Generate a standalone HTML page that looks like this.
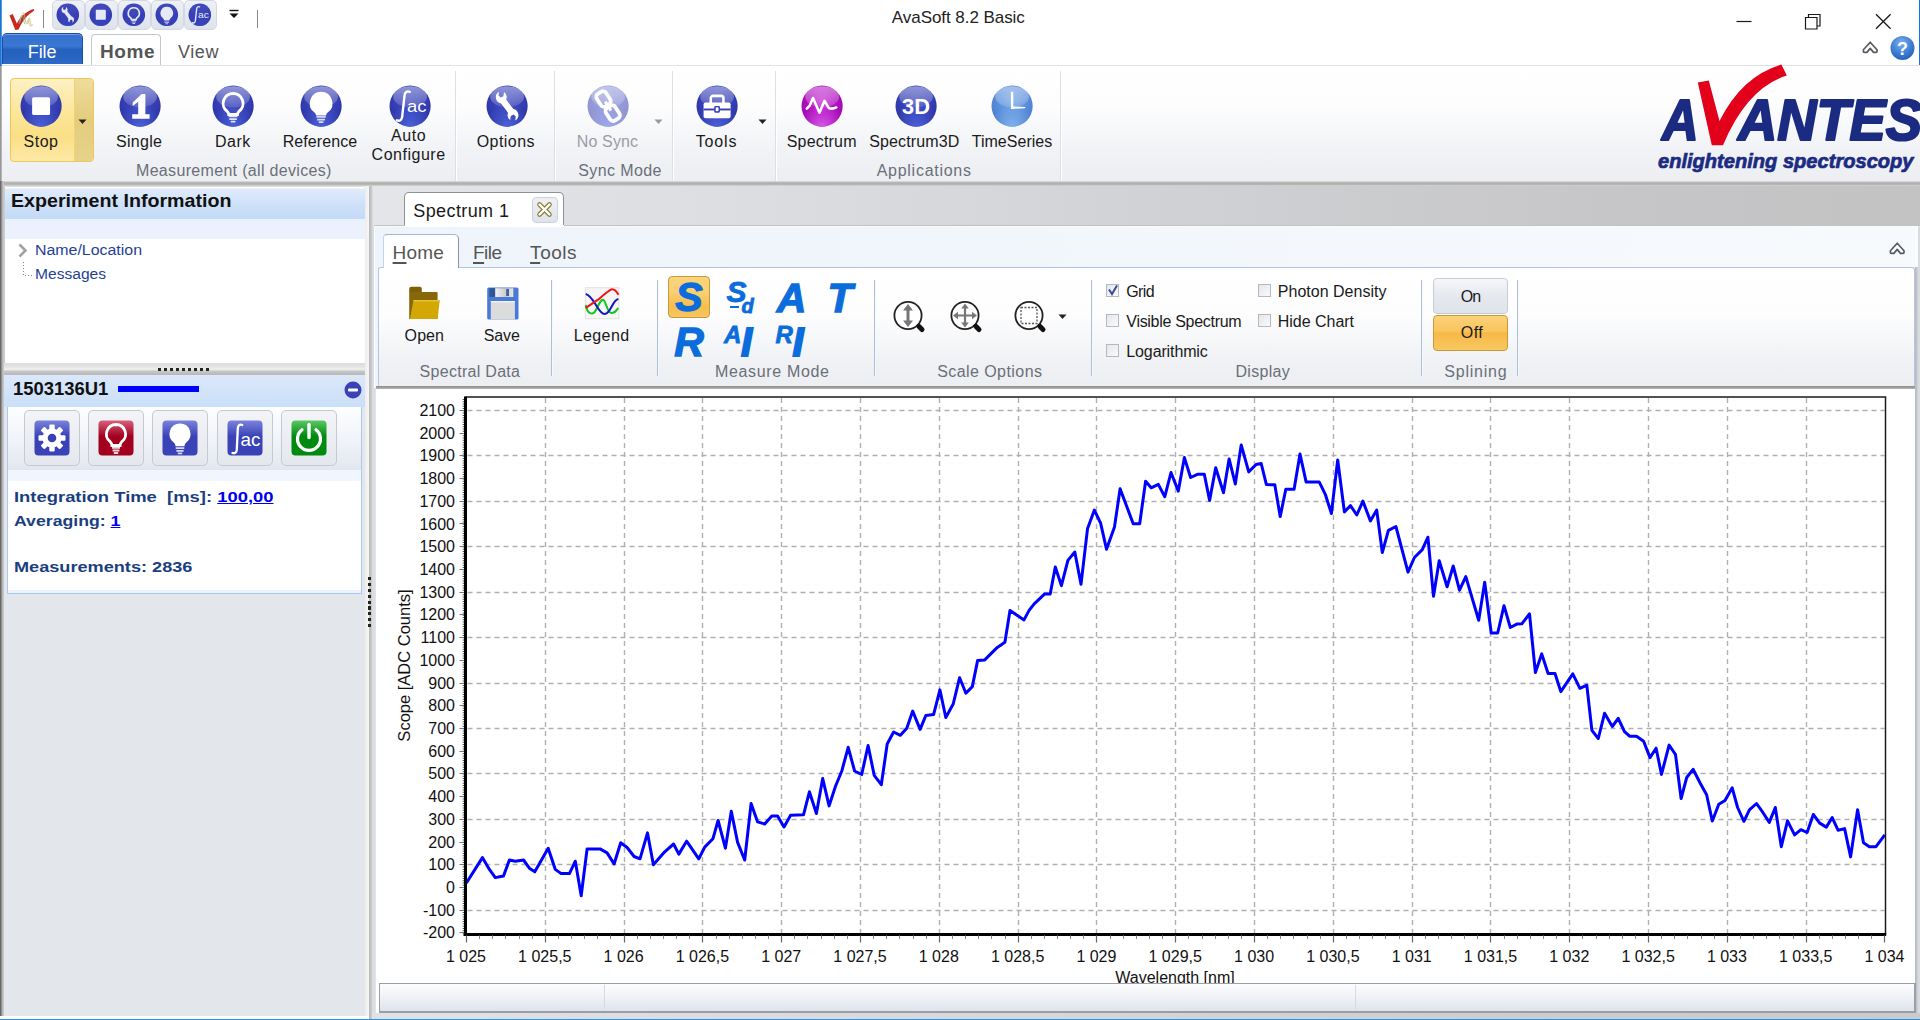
<!DOCTYPE html>
<html><head><meta charset="utf-8"><title>AvaSoft 8.2 Basic</title>
<style>
*{box-sizing:border-box;margin:0;padding:0}
html,body{width:1920px;height:1020px;overflow:hidden;background:#fff}
body{font-family:"Liberation Sans",sans-serif;position:relative;color:#1e1e1e}
.a{position:absolute}
.t{position:absolute;white-space:nowrap;line-height:1}
.c{transform:translateX(-50%)}
.lbl{font-size:16px;color:#1a1a1a;text-align:center}
.grp{font-size:16px;color:#6a6f78}
.sep{position:absolute;width:1px;background:#dcdfe5}
.sep2{position:absolute;width:1px;background:#fff}
</style></head><body>

<div class="a" style="left:0;top:0;width:1920px;height:65px;background:#fff"></div>
<div class="t" style="top:8.5px;font-size:17px;color:#222;letter-spacing:-0.052px;left:891.8px;">AvaSoft 8.2 Basic</div>
<svg class="a" style="left:0;top:0" width="1920" height="34"><path d="M1736.500 21.500h15" stroke="#1a1a1a" stroke-width="1.200" fill="none"/><path d="M1805.500 17.500h11.500v11.500h-11.500z M1808.500 17.500v-3h11.500v11.500h-3" stroke="#1a1a1a" stroke-width="1.200" fill="none"/><path d="M1876 14.200l14.600 14.600M1890.600 14.200l-14.600 14.600" stroke="#1a1a1a" stroke-width="1.300" fill="none"/></svg>
<svg class="a" style="left:0;top:0" width="40" height="34"><path d="M9.500 15.500l3.200-1.600 4.200 9.500C20 17 26 11.500 33.500 9l.9 1.400C27.500 14.500 22 21 18.600 29.600l-3.300.4Z" fill="#c8281e"/>
<path d="M20 22c1-5 2.400-9 3.400-9s1.400 4 2.200 8 1.600 4 2.400 0 1.400-4 2 0 1.400 4 2.200 4" fill="none" stroke="#b9c77a" stroke-width="1" opacity=".9"/>
<path d="M19 24c1.200-6 2.600-10 3.600-8s1.400 8 2.400 8" fill="none" stroke="#7db3a0" stroke-width="1" opacity=".8"/>
<path d="M28 20c.8 4 1.600 6 2.600 6s1.800-2 2.600-1" fill="none" stroke="#e7b68a" stroke-width="1" opacity=".9"/></svg><div class="a" style="left:43px;top:10px;width:1px;height:18px;background:#8a8a8a"></div><div class="a" style="left:52px;top:0px;width:32.500px;height:29.500px;border-radius:5px;background:linear-gradient(#eef1f6,#dde2ec);border:1px solid #d3d8e1"></div><div class="a" style="left:85px;top:0px;width:32.500px;height:29.500px;border-radius:5px;background:linear-gradient(#eef1f6,#dde2ec);border:1px solid #d3d8e1"></div><div class="a" style="left:118px;top:0px;width:32.500px;height:29.500px;border-radius:5px;background:linear-gradient(#eef1f6,#dde2ec);border:1px solid #d3d8e1"></div><div class="a" style="left:151px;top:0px;width:32.500px;height:29.500px;border-radius:5px;background:linear-gradient(#eef1f6,#dde2ec);border:1px solid #d3d8e1"></div><div class="a" style="left:184px;top:0px;width:32.500px;height:29.500px;border-radius:5px;background:linear-gradient(#eef1f6,#dde2ec);border:1px solid #d3d8e1"></div><svg class="a" style="left:56.2px;top:3.1999999999999993px;" width="23.6" height="23.6" viewBox="0 0 23.6 23.6"><defs>
<radialGradient id="g1" cx="50%" cy="38%" r="62%"><stop offset="0" stop-color="#3a44b8"/><stop offset=".55" stop-color="#3740b6"/><stop offset="1" stop-color="#343cb2"/></radialGradient>
<linearGradient id="g2" x1="0" y1="0" x2="0" y2="1"><stop offset="0" stop-color="#fff" stop-opacity=".45"/><stop offset="1" stop-color="#fff" stop-opacity=".13"/></linearGradient>
<radialGradient id="g3" cx="50%" cy="100%" r="55%"><stop offset="0" stop-color="#3a46bc" stop-opacity=".9"/><stop offset="1" stop-color="#3a46bc" stop-opacity="0"/></radialGradient>
</defs>
<g opacity="1"><circle cx="11.8" cy="11.8" r="11.3" fill="url(#g1)"/>
<circle cx="11.8" cy="11.8" r="11.3" fill="url(#g3)"/>
<ellipse cx="11.8" cy="6.608000000000001" rx="9.440000000000001" ry="5.9" fill="url(#g2)" opacity="0.12"/>
<g transform="scale(0.5900000000000001)" opacity="0.88"><g transform="rotate(-37 20 20) translate(20 20) scale(1.120) translate(-20 -20.500)"><path d="M17.300 15.600V25a2.700 2.700 0 0 0 5.400 0v-9.400a5.400 5.400 0 0 0 2.400-6.200l-2.600 2.600-2.500-.5-.5-2.500 2.400-2.400a5.400 5.400 0 0 0-4.600 9Z" fill="#fff"/><path d="M17.300 24v1.500a5.200 5.200 0 0 0-2.300 6l2.500-2.500 2.500.5.5 2.500-2.400 2.400a5.300 5.300 0 0 0 4.600-8.900V24Z" fill="#fff"/></g></g></g></svg><svg class="a" style="left:89.2px;top:3.1999999999999993px;" width="23.6" height="23.6" viewBox="0 0 23.6 23.6"><defs>
<radialGradient id="g4" cx="50%" cy="38%" r="62%"><stop offset="0" stop-color="#3a44b8"/><stop offset=".55" stop-color="#3740b6"/><stop offset="1" stop-color="#343cb2"/></radialGradient>
<linearGradient id="g5" x1="0" y1="0" x2="0" y2="1"><stop offset="0" stop-color="#fff" stop-opacity=".45"/><stop offset="1" stop-color="#fff" stop-opacity=".13"/></linearGradient>
<radialGradient id="g6" cx="50%" cy="100%" r="55%"><stop offset="0" stop-color="#3a46bc" stop-opacity=".9"/><stop offset="1" stop-color="#3a46bc" stop-opacity="0"/></radialGradient>
</defs>
<g opacity="1"><circle cx="11.8" cy="11.8" r="11.3" fill="url(#g4)"/>
<circle cx="11.8" cy="11.8" r="11.3" fill="url(#g6)"/>
<ellipse cx="11.8" cy="6.608000000000001" rx="9.440000000000001" ry="5.9" fill="url(#g5)" opacity="0.12"/>
<g transform="scale(0.5900000000000001)" opacity="0.88"><rect x="11.500" y="11.500" width="17" height="17" rx="1.500" fill="#fff"/></g></g></svg><svg class="a" style="left:122.2px;top:3.1999999999999993px;" width="23.6" height="23.6" viewBox="0 0 23.6 23.6"><defs>
<radialGradient id="g7" cx="50%" cy="38%" r="62%"><stop offset="0" stop-color="#3a44b8"/><stop offset=".55" stop-color="#3740b6"/><stop offset="1" stop-color="#343cb2"/></radialGradient>
<linearGradient id="g8" x1="0" y1="0" x2="0" y2="1"><stop offset="0" stop-color="#fff" stop-opacity=".45"/><stop offset="1" stop-color="#fff" stop-opacity=".13"/></linearGradient>
<radialGradient id="g9" cx="50%" cy="100%" r="55%"><stop offset="0" stop-color="#3a46bc" stop-opacity=".9"/><stop offset="1" stop-color="#3a46bc" stop-opacity="0"/></radialGradient>
</defs>
<g opacity="1"><circle cx="11.8" cy="11.8" r="11.3" fill="url(#g7)"/>
<circle cx="11.8" cy="11.8" r="11.3" fill="url(#g9)"/>
<ellipse cx="11.8" cy="6.608000000000001" rx="9.440000000000001" ry="5.9" fill="url(#g8)" opacity="0.12"/>
<g transform="scale(0.5900000000000001)" opacity="0.88"><path d="M20 8a9.400 9.400 0 0 0-5.700 16.900c1.100 1 1.500 1.900 1.600 3.100h8.200c.1-1.200.5-2.100 1.600-3.100A9.400 9.400 0 0 0 20 8Z" fill="none" stroke="#fff" stroke-width="2.800"/><path d="M15.800 29.700h8.400M16.400 32.300h7.200M17.800 34.700h4.400" stroke="#fff" stroke-width="1.700" opacity=".85"/></g></g></svg><svg class="a" style="left:155.2px;top:3.1999999999999993px;" width="23.6" height="23.6" viewBox="0 0 23.6 23.6"><defs>
<radialGradient id="g10" cx="50%" cy="38%" r="62%"><stop offset="0" stop-color="#3a44b8"/><stop offset=".55" stop-color="#3740b6"/><stop offset="1" stop-color="#343cb2"/></radialGradient>
<linearGradient id="g11" x1="0" y1="0" x2="0" y2="1"><stop offset="0" stop-color="#fff" stop-opacity=".45"/><stop offset="1" stop-color="#fff" stop-opacity=".13"/></linearGradient>
<radialGradient id="g12" cx="50%" cy="100%" r="55%"><stop offset="0" stop-color="#3a46bc" stop-opacity=".9"/><stop offset="1" stop-color="#3a46bc" stop-opacity="0"/></radialGradient>
</defs>
<g opacity="1"><circle cx="11.8" cy="11.8" r="11.3" fill="url(#g10)"/>
<circle cx="11.8" cy="11.8" r="11.3" fill="url(#g12)"/>
<ellipse cx="11.8" cy="6.608000000000001" rx="9.440000000000001" ry="5.9" fill="url(#g11)" opacity="0.12"/>
<g transform="scale(0.5900000000000001)" opacity="0.88"><path d="M20 6.500a10.800 10.800 0 0 0-6.500 19.400c1.100 1 1.600 1.800 1.700 3.100h9.600c.1-1.300.6-2.100 1.700-3.100A10.800 10.800 0 0 0 20 6.500Z" fill="#fff"/><path d="M15.600 30.300h8.800M16.300 32.800h7.400M17.800 35.200h4.400" stroke="#fff" stroke-width="1.600" opacity=".8"/></g></g></svg><svg class="a" style="left:188.2px;top:3.1999999999999993px;" width="23.6" height="23.6" viewBox="0 0 23.6 23.6"><defs>
<radialGradient id="g13" cx="50%" cy="38%" r="62%"><stop offset="0" stop-color="#3a44b8"/><stop offset=".55" stop-color="#3740b6"/><stop offset="1" stop-color="#343cb2"/></radialGradient>
<linearGradient id="g14" x1="0" y1="0" x2="0" y2="1"><stop offset="0" stop-color="#fff" stop-opacity=".45"/><stop offset="1" stop-color="#fff" stop-opacity=".13"/></linearGradient>
<radialGradient id="g15" cx="50%" cy="100%" r="55%"><stop offset="0" stop-color="#3a46bc" stop-opacity=".9"/><stop offset="1" stop-color="#3a46bc" stop-opacity="0"/></radialGradient>
</defs>
<g opacity="1"><circle cx="11.8" cy="11.8" r="11.3" fill="url(#g13)"/>
<circle cx="11.8" cy="11.8" r="11.3" fill="url(#g15)"/>
<ellipse cx="11.8" cy="6.608000000000001" rx="9.440000000000001" ry="5.9" fill="url(#g14)" opacity="0.12"/>
<g transform="scale(0.5900000000000001)" opacity="0.88"><path d="M7.500 33.500c2.800 1 4.600-.3 5-3.500l2.200-20c.4-3.200 2.200-4.500 5-3.500" fill="none" stroke="#fff" stroke-width="2.300" stroke-linecap="round"/><text x="17" y="25.500" font-family="Liberation Sans" font-size="16.500" fill="#fff" textLength="18.500" lengthAdjust="spacingAndGlyphs">ac</text></g></g></svg><svg class="a" style="left:226px;top:7px" width="16" height="14"><path d="M3.500 3.500h9" stroke="#111" stroke-width="1.400"/><path d="M3.500 6.500h9l-4.500 4.500z" fill="#111"/></svg><div class="a" style="left:257px;top:10px;width:1px;height:18px;background:#8a8a8a"></div>
<div class="a" style="left:2px;top:33px;width:81px;height:31px;border-radius:5px 5px 0 0;background:linear-gradient(#3570cc,#3a78d4 40%,#2660bd 52%,#2a64c2 80%,#2e6cc8);border:1px solid #1b4ea3;border-bottom:none;box-shadow:inset 0 1px 0 #6fa0e6"></div><div class="t" style="top:42.5px;font-size:18px;color:#fff;letter-spacing:-0.126px;left:27.8px;">File</div><div class="a" style="left:91px;top:34px;width:70px;height:32px;border-radius:4px 4px 0 0;background:#fff;border:1px solid #c4c8ce;border-bottom:none"></div><div class="t" style="top:42.3px;font-size:19px;color:#555;font-weight:bold;letter-spacing:0.553px;left:100.0px;">Home</div><div class="t" style="top:42.5px;font-size:18px;color:#555;letter-spacing:0.577px;left:178.0px;">View</div>
<svg class="a" style="left:1858px;top:36px" width="62" height="26">
<path d="M12.200 6.200L19 13.700V15.500Q19 16.400 18 16.400H15.500L12.200 12.400L8.900 16.400H6.400Q5.400 16.400 5.400 15.500V13.700Z" fill="#fff" stroke="#565c66" stroke-width="1.700" stroke-linejoin="round"/>
<defs><radialGradient id="g16" cx="45%" cy="30%" r="70%"><stop offset="0" stop-color="#7fb1ee"/><stop offset=".6" stop-color="#3f7fd6"/><stop offset="1" stop-color="#2a62b8"/></radialGradient></defs>
<circle cx="44.500" cy="12" r="12" fill="url(#g16)"/>
<text x="44.500" y="18.500" text-anchor="middle" font-family="Liberation Sans" font-weight="bold" font-size="18" fill="#fff">?</text>
</svg>
<div class="a" style="left:2px;top:65px;width:1918px;height:116px;background:linear-gradient(#ffffff 0%,#fdfdfe 35%,#f0f2f5 75%,#ecEEf2 100%);border-top:1px solid #dfe2e6"></div>
<div class="a" style="left:0;top:181px;width:1920px;height:7px;background:linear-gradient(#e4e4e5 0,#b6b6b7 22%,#aeaeaf 45%,#c4c4c5 60%,#dcdcde 72%,#e2e2e4 100%)"></div>
<div class="a" style="left:0;top:0;width:2px;height:66px;background:linear-gradient(90deg,#1976d8 60%,#a8ccf0)"></div>
<div class="a" style="left:0;top:66px;width:2px;height:116px;background:linear-gradient(90deg,#8a8a8a,#c4c4c4)"></div>
<div class="a" style="left:0;top:181px;width:4px;height:836px;background:linear-gradient(90deg,#555 0,#808080 28%,#b4b4b4 60%,#d0d0d0)"></div>
<div class="a" style="left:1919px;top:0;width:1px;height:65px;background:#1976d8"></div>
<div class="a" style="left:10px;top:78px;width:84px;height:84px;border-radius:4px;border:1px solid #f0c656;background:linear-gradient(#fdf1c4,#fce69a 40%,#fbdf86 70%,#fde9a6)"></div><div class="a" style="left:74px;top:79px;width:19px;height:82px;border-radius:0 3px 3px 0;border-left:1px solid #f3d36e;background:linear-gradient(#efdc9b,#e3cc7d 50%,#e6d28a)"></div><svg class="a" style="left:78px;top:118.500px" width="10" height="6"><path d="M.5 .500h8l-4 4.500z" fill="#222"/></svg><svg class="a" style="left:19.9px;top:85.19999999999999px;" width="42.2" height="42.2" viewBox="0 0 42.2 42.2"><defs>
<radialGradient id="g17" cx="50%" cy="38%" r="62%"><stop offset="0" stop-color="#4650c0"/><stop offset=".55" stop-color="#3640b6"/><stop offset="1" stop-color="#2c34a2"/></radialGradient>
<linearGradient id="g18" x1="0" y1="0" x2="0" y2="1"><stop offset="0" stop-color="#fff" stop-opacity=".45"/><stop offset="1" stop-color="#fff" stop-opacity=".13"/></linearGradient>
<radialGradient id="g19" cx="50%" cy="100%" r="55%"><stop offset="0" stop-color="#4f66e0" stop-opacity=".9"/><stop offset="1" stop-color="#4f66e0" stop-opacity="0"/></radialGradient>
</defs>
<g opacity="1"><circle cx="21.1" cy="21.1" r="20.6" fill="url(#g17)"/>
<circle cx="21.1" cy="21.1" r="20.6" fill="url(#g19)"/>
<ellipse cx="21.1" cy="11.816000000000003" rx="16.880000000000003" ry="10.55" fill="url(#g18)" opacity="1"/>
<g transform="scale(1.0550000000000002)" opacity="1"><rect x="11.500" y="11.500" width="17" height="17" rx="1.500" fill="#fff"/></g></g></svg><div class="t" style="top:134px;font-size:16px;color:#1a1a1a;letter-spacing:0.521px;left:23.5px;">Stop</div><svg class="a" style="left:118.9px;top:85.19999999999999px;" width="42.2" height="42.2" viewBox="0 0 42.2 42.2"><defs>
<radialGradient id="g20" cx="50%" cy="38%" r="62%"><stop offset="0" stop-color="#4650c0"/><stop offset=".55" stop-color="#3640b6"/><stop offset="1" stop-color="#2c34a2"/></radialGradient>
<linearGradient id="g21" x1="0" y1="0" x2="0" y2="1"><stop offset="0" stop-color="#fff" stop-opacity=".45"/><stop offset="1" stop-color="#fff" stop-opacity=".13"/></linearGradient>
<radialGradient id="g22" cx="50%" cy="100%" r="55%"><stop offset="0" stop-color="#4f66e0" stop-opacity=".9"/><stop offset="1" stop-color="#4f66e0" stop-opacity="0"/></radialGradient>
</defs>
<g opacity="1"><circle cx="21.1" cy="21.1" r="20.6" fill="url(#g20)"/>
<circle cx="21.1" cy="21.1" r="20.6" fill="url(#g22)"/>
<ellipse cx="21.1" cy="11.816000000000003" rx="16.880000000000003" ry="10.55" fill="url(#g21)" opacity="1"/>
<g transform="scale(1.0550000000000002)" opacity="1"><path d="M13 16.500 L21.500 8.500 H25 V27.800 H29 V32 H12.500 V27.800 H18.200 V15.800 L13 20Z" fill="#fff"/></g></g></svg><div class="t" style="top:134px;font-size:16px;color:#1a1a1a;letter-spacing:0.304px;left:116.0px;">Single</div><svg class="a" style="left:211.9px;top:85.19999999999999px;" width="42.2" height="42.2" viewBox="0 0 42.2 42.2"><defs>
<radialGradient id="g23" cx="50%" cy="38%" r="62%"><stop offset="0" stop-color="#4650c0"/><stop offset=".55" stop-color="#3640b6"/><stop offset="1" stop-color="#2c34a2"/></radialGradient>
<linearGradient id="g24" x1="0" y1="0" x2="0" y2="1"><stop offset="0" stop-color="#fff" stop-opacity=".45"/><stop offset="1" stop-color="#fff" stop-opacity=".13"/></linearGradient>
<radialGradient id="g25" cx="50%" cy="100%" r="55%"><stop offset="0" stop-color="#4f66e0" stop-opacity=".9"/><stop offset="1" stop-color="#4f66e0" stop-opacity="0"/></radialGradient>
</defs>
<g opacity="1"><circle cx="21.1" cy="21.1" r="20.6" fill="url(#g23)"/>
<circle cx="21.1" cy="21.1" r="20.6" fill="url(#g25)"/>
<ellipse cx="21.1" cy="11.816000000000003" rx="16.880000000000003" ry="10.55" fill="url(#g24)" opacity="1"/>
<g transform="scale(1.0550000000000002)" opacity="1"><path d="M20 8a9.400 9.400 0 0 0-5.700 16.900c1.100 1 1.500 1.900 1.600 3.100h8.200c.1-1.200.5-2.100 1.600-3.100A9.400 9.400 0 0 0 20 8Z" fill="none" stroke="#fff" stroke-width="2.800"/><path d="M15.800 29.700h8.400M16.400 32.300h7.200M17.800 34.700h4.400" stroke="#fff" stroke-width="1.700" opacity=".85"/></g></g></svg><div class="t" style="top:134px;font-size:16px;color:#1a1a1a;letter-spacing:0.479px;left:215.0px;">Dark</div><svg class="a" style="left:300.4px;top:85.19999999999999px;" width="42.2" height="42.2" viewBox="0 0 42.2 42.2"><defs>
<radialGradient id="g26" cx="50%" cy="38%" r="62%"><stop offset="0" stop-color="#4650c0"/><stop offset=".55" stop-color="#3640b6"/><stop offset="1" stop-color="#2c34a2"/></radialGradient>
<linearGradient id="g27" x1="0" y1="0" x2="0" y2="1"><stop offset="0" stop-color="#fff" stop-opacity=".45"/><stop offset="1" stop-color="#fff" stop-opacity=".13"/></linearGradient>
<radialGradient id="g28" cx="50%" cy="100%" r="55%"><stop offset="0" stop-color="#4f66e0" stop-opacity=".9"/><stop offset="1" stop-color="#4f66e0" stop-opacity="0"/></radialGradient>
</defs>
<g opacity="1"><circle cx="21.1" cy="21.1" r="20.6" fill="url(#g26)"/>
<circle cx="21.1" cy="21.1" r="20.6" fill="url(#g28)"/>
<ellipse cx="21.1" cy="11.816000000000003" rx="16.880000000000003" ry="10.55" fill="url(#g27)" opacity="1"/>
<g transform="scale(1.0550000000000002)" opacity="1"><path d="M20 6.500a10.800 10.800 0 0 0-6.500 19.400c1.100 1 1.600 1.800 1.700 3.100h9.600c.1-1.300.6-2.100 1.700-3.100A10.800 10.800 0 0 0 20 6.500Z" fill="#fff"/><path d="M15.600 30.300h8.800M16.300 32.800h7.400M17.800 35.200h4.400" stroke="#fff" stroke-width="1.600" opacity=".8"/></g></g></svg><div class="t" style="top:134px;font-size:16px;color:#1a1a1a;letter-spacing:0.086px;left:282.7px;">Reference</div><svg class="a" style="left:388.9px;top:85.19999999999999px;" width="42.2" height="42.2" viewBox="0 0 42.2 42.2"><defs>
<radialGradient id="g29" cx="50%" cy="38%" r="62%"><stop offset="0" stop-color="#4650c0"/><stop offset=".55" stop-color="#3640b6"/><stop offset="1" stop-color="#2c34a2"/></radialGradient>
<linearGradient id="g30" x1="0" y1="0" x2="0" y2="1"><stop offset="0" stop-color="#fff" stop-opacity=".45"/><stop offset="1" stop-color="#fff" stop-opacity=".13"/></linearGradient>
<radialGradient id="g31" cx="50%" cy="100%" r="55%"><stop offset="0" stop-color="#4f66e0" stop-opacity=".9"/><stop offset="1" stop-color="#4f66e0" stop-opacity="0"/></radialGradient>
</defs>
<g opacity="1"><circle cx="21.1" cy="21.1" r="20.6" fill="url(#g29)"/>
<circle cx="21.1" cy="21.1" r="20.6" fill="url(#g31)"/>
<ellipse cx="21.1" cy="11.816000000000003" rx="16.880000000000003" ry="10.55" fill="url(#g30)" opacity="1"/>
<g transform="scale(1.0550000000000002)" opacity="1"><path d="M7.500 33.500c2.800 1 4.600-.3 5-3.500l2.200-20c.4-3.200 2.200-4.500 5-3.500" fill="none" stroke="#fff" stroke-width="2.300" stroke-linecap="round"/><text x="17" y="25.500" font-family="Liberation Sans" font-size="16.500" fill="#fff" textLength="18.500" lengthAdjust="spacingAndGlyphs">ac</text></g></g></svg><svg class="a" style="left:486.4px;top:85.19999999999999px;" width="42.2" height="42.2" viewBox="0 0 42.2 42.2"><defs>
<radialGradient id="g32" cx="50%" cy="38%" r="62%"><stop offset="0" stop-color="#4650c0"/><stop offset=".55" stop-color="#3640b6"/><stop offset="1" stop-color="#2c34a2"/></radialGradient>
<linearGradient id="g33" x1="0" y1="0" x2="0" y2="1"><stop offset="0" stop-color="#fff" stop-opacity=".45"/><stop offset="1" stop-color="#fff" stop-opacity=".13"/></linearGradient>
<radialGradient id="g34" cx="50%" cy="100%" r="55%"><stop offset="0" stop-color="#4f66e0" stop-opacity=".9"/><stop offset="1" stop-color="#4f66e0" stop-opacity="0"/></radialGradient>
</defs>
<g opacity="1"><circle cx="21.1" cy="21.1" r="20.6" fill="url(#g32)"/>
<circle cx="21.1" cy="21.1" r="20.6" fill="url(#g34)"/>
<ellipse cx="21.1" cy="11.816000000000003" rx="16.880000000000003" ry="10.55" fill="url(#g33)" opacity="1"/>
<g transform="scale(1.0550000000000002)" opacity="1"><g transform="rotate(-37 20 20) translate(20 20) scale(1.120) translate(-20 -20.500)"><path d="M17.300 15.600V25a2.700 2.700 0 0 0 5.400 0v-9.400a5.400 5.400 0 0 0 2.400-6.200l-2.600 2.600-2.500-.5-.5-2.500 2.400-2.400a5.400 5.400 0 0 0-4.600 9Z" fill="#fff"/><path d="M17.300 24v1.500a5.200 5.200 0 0 0-2.300 6l2.500-2.500 2.500.5.5 2.500-2.400 2.400a5.300 5.300 0 0 0 4.600-8.900V24Z" fill="#fff"/></g></g></g></svg><div class="t" style="top:134px;font-size:16px;color:#1a1a1a;letter-spacing:0.451px;left:476.7px;">Options</div><svg class="a" style="left:586.9px;top:85.19999999999999px;" width="42.2" height="42.2" viewBox="0 0 42.2 42.2"><defs>
<radialGradient id="g35" cx="50%" cy="38%" r="62%"><stop offset="0" stop-color="#4650c0"/><stop offset=".55" stop-color="#3640b6"/><stop offset="1" stop-color="#2c34a2"/></radialGradient>
<linearGradient id="g36" x1="0" y1="0" x2="0" y2="1"><stop offset="0" stop-color="#fff" stop-opacity=".45"/><stop offset="1" stop-color="#fff" stop-opacity=".13"/></linearGradient>
<radialGradient id="g37" cx="50%" cy="100%" r="55%"><stop offset="0" stop-color="#4f66e0" stop-opacity=".9"/><stop offset="1" stop-color="#4f66e0" stop-opacity="0"/></radialGradient>
</defs>
<g opacity="0.52"><circle cx="21.1" cy="21.1" r="20.6" fill="url(#g35)"/>
<circle cx="21.1" cy="21.1" r="20.6" fill="url(#g37)"/>
<ellipse cx="21.1" cy="11.816000000000003" rx="16.880000000000003" ry="10.55" fill="url(#g36)" opacity="1"/>
<g transform="scale(1.0550000000000002)" opacity="1"><g transform="rotate(-33 20 20)" fill="none" stroke="#fff" stroke-width="3.600"><rect x="14.800" y="5" width="10.400" height="14" rx="3.400"/><rect x="14.800" y="21" width="10.400" height="14" rx="3.400"/><path d="M20 15v10" stroke-width="3"/></g></g></g></svg><div class="t" style="top:134px;font-size:16px;color:#9a9da4;letter-spacing:0.161px;left:576.7px;">No Sync</div><svg class="a" style="left:696.4px;top:85.19999999999999px;" width="42.2" height="42.2" viewBox="0 0 42.2 42.2"><defs>
<radialGradient id="g38" cx="50%" cy="38%" r="62%"><stop offset="0" stop-color="#4650c0"/><stop offset=".55" stop-color="#3640b6"/><stop offset="1" stop-color="#2c34a2"/></radialGradient>
<linearGradient id="g39" x1="0" y1="0" x2="0" y2="1"><stop offset="0" stop-color="#fff" stop-opacity=".45"/><stop offset="1" stop-color="#fff" stop-opacity=".13"/></linearGradient>
<radialGradient id="g40" cx="50%" cy="100%" r="55%"><stop offset="0" stop-color="#4f66e0" stop-opacity=".9"/><stop offset="1" stop-color="#4f66e0" stop-opacity="0"/></radialGradient>
</defs>
<g opacity="1"><circle cx="21.1" cy="21.1" r="20.6" fill="url(#g38)"/>
<circle cx="21.1" cy="21.1" r="20.6" fill="url(#g40)"/>
<ellipse cx="21.1" cy="11.816000000000003" rx="16.880000000000003" ry="10.55" fill="url(#g39)" opacity="1"/>
<g transform="scale(1.0550000000000002)" opacity="1"><path d="M14 17v-4.500a2.200 2.200 0 0 1 2.200-2.200h7.600a2.200 2.200 0 0 1 2.200 2.200V17" fill="none" stroke="#fff" stroke-width="2.400"/><rect x="7.200" y="16.500" width="25.600" height="15" rx="1.800" fill="#fff"/><rect x="7.200" y="22.300" width="25.600" height="1.800" fill="#3840b4"/><rect x="17.300" y="19.800" width="5.400" height="6.400" rx="1" fill="#3840b4"/><rect x="18.700" y="21.200" width="2.600" height="3.600" fill="#fff"/></g></g></svg><div class="t" style="top:134px;font-size:16px;color:#1a1a1a;letter-spacing:0.850px;left:695.7px;">Tools</div><svg class="a" style="left:801.4px;top:85.19999999999999px;" width="42.2" height="42.2" viewBox="0 0 42.2 42.2"><defs>
<radialGradient id="g41" cx="50%" cy="38%" r="62%"><stop offset="0" stop-color="#c838d4"/><stop offset=".55" stop-color="#b010c0"/><stop offset="1" stop-color="#9a0aa8"/></radialGradient>
<linearGradient id="g42" x1="0" y1="0" x2="0" y2="1"><stop offset="0" stop-color="#fff" stop-opacity=".45"/><stop offset="1" stop-color="#fff" stop-opacity=".13"/></linearGradient>
<radialGradient id="g43" cx="50%" cy="100%" r="55%"><stop offset="0" stop-color="#e060f0" stop-opacity=".9"/><stop offset="1" stop-color="#e060f0" stop-opacity="0"/></radialGradient>
</defs>
<g opacity="1"><circle cx="21.1" cy="21.1" r="20.6" fill="url(#g41)"/>
<circle cx="21.1" cy="21.1" r="20.6" fill="url(#g43)"/>
<ellipse cx="21.1" cy="11.816000000000003" rx="16.880000000000003" ry="10.55" fill="url(#g42)" opacity="1"/>
<g transform="scale(1.0550000000000002)" opacity="1"><path d="M5.500 22.500L8.300 19.500L11.400 12.300L17.500 26.300L22.300 15L26.300 21.800Q29.500 23.200 33.500 21.300" fill="none" stroke="#fff" stroke-width="2.400" stroke-linejoin="round" stroke-linecap="round"/></g></g></svg><div class="t" style="top:134px;font-size:16px;color:#1a1a1a;letter-spacing:0.191px;left:786.7px;">Spectrum</div><svg class="a" style="left:894.5px;top:85.19999999999999px;" width="42.2" height="42.2" viewBox="0 0 42.2 42.2"><defs>
<radialGradient id="g44" cx="50%" cy="38%" r="62%"><stop offset="0" stop-color="#4650c0"/><stop offset=".55" stop-color="#3640b6"/><stop offset="1" stop-color="#2c34a2"/></radialGradient>
<linearGradient id="g45" x1="0" y1="0" x2="0" y2="1"><stop offset="0" stop-color="#fff" stop-opacity=".45"/><stop offset="1" stop-color="#fff" stop-opacity=".13"/></linearGradient>
<radialGradient id="g46" cx="50%" cy="100%" r="55%"><stop offset="0" stop-color="#4f66e0" stop-opacity=".9"/><stop offset="1" stop-color="#4f66e0" stop-opacity="0"/></radialGradient>
</defs>
<g opacity="1"><circle cx="21.1" cy="21.1" r="20.6" fill="url(#g44)"/>
<circle cx="21.1" cy="21.1" r="20.6" fill="url(#g46)"/>
<ellipse cx="21.1" cy="11.816000000000003" rx="16.880000000000003" ry="10.55" fill="url(#g45)" opacity="1"/>
<g transform="scale(1.0550000000000002)" opacity="1"><text x="20" y="27.600" text-anchor="middle" font-family="Liberation Sans" font-weight="bold" font-size="21" fill="#fff" textLength="26.500" lengthAdjust="spacingAndGlyphs">3D</text></g></g></svg><div class="t" style="top:134px;font-size:16px;color:#1a1a1a;letter-spacing:0.108px;left:869.3px;">Spectrum3D</div><svg class="a" style="left:990.6999999999999px;top:85.19999999999999px;" width="42.2" height="42.2" viewBox="0 0 42.2 42.2"><defs>
<radialGradient id="g47" cx="50%" cy="38%" r="62%"><stop offset="0" stop-color="#7aa8e6"/><stop offset=".55" stop-color="#5a8fdc"/><stop offset="1" stop-color="#4a7ccc"/></radialGradient>
<linearGradient id="g48" x1="0" y1="0" x2="0" y2="1"><stop offset="0" stop-color="#fff" stop-opacity=".45"/><stop offset="1" stop-color="#fff" stop-opacity=".13"/></linearGradient>
<radialGradient id="g49" cx="50%" cy="100%" r="55%"><stop offset="0" stop-color="#8ab8f0" stop-opacity=".9"/><stop offset="1" stop-color="#8ab8f0" stop-opacity="0"/></radialGradient>
</defs>
<g opacity="1"><circle cx="21.1" cy="21.1" r="20.6" fill="url(#g47)"/>
<circle cx="21.1" cy="21.1" r="20.6" fill="url(#g49)"/>
<ellipse cx="21.1" cy="11.816000000000003" rx="16.880000000000003" ry="10.55" fill="url(#g48)" opacity="1"/>
<g transform="scale(1.0550000000000002)" opacity="1"><path d="M18.900 6.500h2.200V20.300L32.500 20.900V22L20 22.700h-1.100Z" fill="#fff"/></g></g></svg><div class="t" style="top:134px;font-size:16px;color:#1a1a1a;letter-spacing:0.028px;left:971.7px;">TimeSeries</div><div class="t" style="top:128px;font-size:16px;color:#1a1a1a;letter-spacing:0.521px;left:391.1px;">Auto</div><div class="t" style="top:147px;font-size:16px;color:#1a1a1a;letter-spacing:0.514px;left:371.6px;">Configure</div><svg class="a" style="left:654px;top:118.500px" width="10" height="6"><path d="M.5 .500h8l-4 4.500z" fill="#999"/></svg><svg class="a" style="left:757.500px;top:118.500px" width="10" height="6"><path d="M.5 .500h8l-4 4.500z" fill="#222"/></svg><div class="t" style="top:162.5px;font-size:16px;color:#6a6f78;letter-spacing:0.323px;left:136.0px;">Measurement (all devices)</div><div class="t" style="top:162.5px;font-size:16px;color:#6a6f78;letter-spacing:0.373px;left:578.3px;">Sync Mode</div><div class="t" style="top:162.5px;font-size:16px;color:#6a6f78;letter-spacing:0.727px;left:876.7px;">Applications</div><div class="sep" style="left:455px;top:71px;height:110px"></div><div class="sep2" style="left:456px;top:71px;height:110px"></div><div class="sep" style="left:554px;top:71px;height:110px"></div><div class="sep2" style="left:555px;top:71px;height:110px"></div><div class="sep" style="left:672px;top:71px;height:110px"></div><div class="sep2" style="left:673px;top:71px;height:110px"></div><div class="sep" style="left:775px;top:71px;height:110px"></div><div class="sep2" style="left:776px;top:71px;height:110px"></div><div class="sep" style="left:1060px;top:71px;height:110px"></div><div class="sep2" style="left:1061px;top:71px;height:110px"></div>
<svg class="a" style="left:1640px;top:60px" width="280" height="121" viewBox="1640 60 280 121"><text x="1662" y="139.600" font-family="Liberation Sans" font-weight="bold" font-style="italic" font-size="57.700" fill="#1c2b82" stroke="#1c2b82" stroke-width="2.200" stroke-linejoin="round" textLength="36.500" lengthAdjust="spacingAndGlyphs">A</text><text x="1738" y="139.600" font-family="Liberation Sans" font-weight="bold" font-style="italic" font-size="57.700" fill="#1c2b82" stroke="#1c2b82" stroke-width="2.200" stroke-linejoin="round" textLength="184" lengthAdjust="spacingAndGlyphs">ANTES</text><path d="M1697.800 82.500 L1708.800 80.500 L1719.500 121 Q1742 76 1781.400 64.600 L1786.800 75.600 Q1747 88 1723 145.300 L1711.800 145.300 Z" fill="#e2001a"/><text x="1658" y="167.500" font-family="Liberation Sans" font-weight="bold" font-style="italic" font-size="19.500" fill="#1c2b82" stroke="#1c2b82" stroke-width=".7" textLength="255.500" lengthAdjust="spacingAndGlyphs">enlightening spectroscopy</text></svg>
<div class="a" style="left:4px;top:188px;width:1916px;height:827.600px;background:#e3e6ea"></div>
<div class="a" style="left:4px;top:187px;width:362px;height:177px;background:#fff;border:1px solid #c9ccd2;border-top:none"></div><div class="a" style="left:5px;top:188px;width:360px;height:31px;background:linear-gradient(#dfebfc,#cfe1f9 50%,#c3daf8);border-top:1px solid #f6f4ec"></div><div class="a" style="left:5px;top:219px;width:360px;height:20px;background:#ebf2fd"></div><div class="t" style="top:191.5px;font-size:18.5px;color:#111;font-weight:bold;transform:scaleX(1.0619);transform-origin:0 0;left:11.3px;">Experiment Information</div><svg class="a" style="left:16px;top:242px" width="22" height="40"><path d="M3.500 2.500l6 6-6 6" fill="none" stroke="#a2a2a2" stroke-width="2.600"/><path d="M7.500 20v13.500h9" fill="none" stroke="#888" stroke-width="1" stroke-dasharray="1 2"/></svg><div class="t" style="top:242px;font-size:15.5px;color:#1f3f96;transform:scaleX(1.0263);transform-origin:0 0;left:35.3px;">Name/Location</div><div class="t" style="top:266px;font-size:15.5px;color:#1f3f96;transform:scaleX(1.0050);transform-origin:0 0;left:35.3px;">Messages</div><div class="a" style="left:4px;top:363px;width:362px;height:11.500px;background:linear-gradient(#dcdcdd 0,#e4e4e5 35%,#f0f0f1 52%,#c6c6c7 70%,#b6b6b7 100%)"></div><div class="a" style="left:158px;top:368px;width:52px;height:3px;background:repeating-linear-gradient(90deg,#222 0 3px,transparent 3px 6px)"></div><div class="a" style="left:7px;top:375px;width:355px;height:219px;background:#fff;border:1px solid #a9c9f1;box-shadow:inset 0 -3px 0 #eaf2fd"></div><div class="a" style="left:4px;top:375px;width:362px;height:32px;background:linear-gradient(#dbe8fb,#cadff8)"></div><div class="t" style="top:380px;font-size:18px;color:#111;font-weight:bold;transform:scaleX(1.0238);transform-origin:0 0;left:13.0px;">1503136U1</div><div class="a" style="left:118px;top:386px;width:81px;height:6px;background:#0000ff"></div><svg class="a" style="left:344px;top:381px" width="18" height="18"><circle cx="9" cy="9" r="8.500" fill="#3a42b6"/><rect x="4" y="7.500" width="10" height="3" rx="1" fill="#fff"/></svg><div class="a" style="left:8px;top:407px;width:353px;height:63px;background:linear-gradient(#fdfeff,#f1f4f9 50%,#e2e6ee)"></div><div class="a" style="left:8px;top:470px;width:353px;height:11px;background:#f1f5fd"></div><div class="a" style="left:24px;top:410px;width:56px;height:56px;border-radius:5px;border:1px solid #c5c9d1;background:linear-gradient(#f3f4f7,#e4e7ed)"></div><svg class="a" style="left:34px;top:420px;" width="36" height="36" viewBox="0 0 36 36"><defs><linearGradient id="g50" x1="0" y1="0" x2="0" y2="1"><stop offset="0" stop-color="#7a84dc"/><stop offset=".45" stop-color="#3a42b8"/><stop offset="1" stop-color="#3a42b8"/></linearGradient></defs>
<rect x=".5" y=".5" width="35" height="35" rx="4" fill="url(#g50)"/><g transform="translate(-2 -2)"><g fill="#fff"><circle cx="20" cy="20" r="9.500"/><rect x="17.300" y="6.500" width="5.400" height="7" rx="1" transform="rotate(0 20 20)"/><rect x="17.300" y="6.500" width="5.400" height="7" rx="1" transform="rotate(45 20 20)"/><rect x="17.300" y="6.500" width="5.400" height="7" rx="1" transform="rotate(90 20 20)"/><rect x="17.300" y="6.500" width="5.400" height="7" rx="1" transform="rotate(135 20 20)"/><rect x="17.300" y="6.500" width="5.400" height="7" rx="1" transform="rotate(180 20 20)"/><rect x="17.300" y="6.500" width="5.400" height="7" rx="1" transform="rotate(225 20 20)"/><rect x="17.300" y="6.500" width="5.400" height="7" rx="1" transform="rotate(270 20 20)"/><rect x="17.300" y="6.500" width="5.400" height="7" rx="1" transform="rotate(315 20 20)"/></g><circle cx="20" cy="20" r="4.300" fill="#3840b4"/></g></svg><div class="a" style="left:88px;top:410px;width:56px;height:56px;border-radius:5px;border:1px solid #c5c9d1;background:linear-gradient(#f3f4f7,#e4e7ed)"></div><svg class="a" style="left:98px;top:420px;" width="36" height="36" viewBox="0 0 36 36"><defs><linearGradient id="g51" x1="0" y1="0" x2="0" y2="1"><stop offset="0" stop-color="#d8607a"/><stop offset=".45" stop-color="#a3001f"/><stop offset="1" stop-color="#a3001f"/></linearGradient></defs>
<rect x=".5" y=".5" width="35" height="35" rx="4" fill="url(#g51)"/><g transform="translate(-2 -2)"><path d="M20 6.500a9.600 9.600 0 0 0-5.800 17.200c1.100 1 1.600 2 1.700 3.800h8.200c.1-1.800.6-2.800 1.700-3.800A9.600 9.600 0 0 0 20 6.500Z" fill="none" stroke="#fff" stroke-width="2.800"/><path d="M16 29.800h8M16.600 32.500h6.800M17.800 35h4.400" stroke="#fff" stroke-width="1.800" opacity=".85"/></g></svg><div class="a" style="left:152px;top:410px;width:56px;height:56px;border-radius:5px;border:1px solid #c5c9d1;background:linear-gradient(#f3f4f7,#e4e7ed)"></div><svg class="a" style="left:162px;top:420px;" width="36" height="36" viewBox="0 0 36 36"><defs><linearGradient id="g52" x1="0" y1="0" x2="0" y2="1"><stop offset="0" stop-color="#7a84dc"/><stop offset=".45" stop-color="#3a42b8"/><stop offset="1" stop-color="#3a42b8"/></linearGradient></defs>
<rect x=".5" y=".5" width="35" height="35" rx="4" fill="url(#g52)"/><g transform="translate(-2 -2)"><path d="M20 5.500a10.500 10.500 0 0 0-6.300 18.900c1.100 1 1.700 2 1.800 3.800h9c.1-1.800.7-2.800 1.800-3.800A10.500 10.500 0 0 0 20 5.500Z" fill="#fff"/><path d="M15.700 30.200h8.600M16.400 32.800h7.200M17.800 35.300h4.400" stroke="#fff" stroke-width="1.700" opacity=".8"/></g></svg><div class="a" style="left:217px;top:410px;width:56px;height:56px;border-radius:5px;border:1px solid #c5c9d1;background:linear-gradient(#f3f4f7,#e4e7ed)"></div><svg class="a" style="left:227px;top:420px;" width="36" height="36" viewBox="0 0 36 36"><defs><linearGradient id="g53" x1="0" y1="0" x2="0" y2="1"><stop offset="0" stop-color="#7a84dc"/><stop offset=".45" stop-color="#3a42b8"/><stop offset="1" stop-color="#3a42b8"/></linearGradient></defs>
<rect x=".5" y=".5" width="35" height="35" rx="4" fill="url(#g53)"/><g transform="translate(-2 -2)"><path d="M7.500 35c2.600.8 4.100-.4 4.300-3.500l1-21c.2-3.200 1.800-4.400 4.400-3.500" fill="none" stroke="#fff" stroke-width="2.300" stroke-linecap="round"/><text x="15.500" y="28" font-family="Liberation Sans" font-size="18" fill="#fff" textLength="20" lengthAdjust="spacingAndGlyphs">ac</text></g></svg><div class="a" style="left:281px;top:410px;width:56px;height:56px;border-radius:5px;border:1px solid #c5c9d1;background:linear-gradient(#f3f4f7,#e4e7ed)"></div><svg class="a" style="left:291px;top:420px;" width="36" height="36" viewBox="0 0 36 36"><defs><linearGradient id="g54" x1="0" y1="0" x2="0" y2="1"><stop offset="0" stop-color="#5cc866"/><stop offset=".45" stop-color="#008a10"/><stop offset="1" stop-color="#008a10"/></linearGradient></defs>
<rect x=".5" y=".5" width="35" height="35" rx="4" fill="url(#g54)"/><g transform="translate(-2 -2)"><path d="M13 11.800a11.500 11.500 0 1 0 14 0" fill="none" stroke="#fff" stroke-width="3.200" stroke-linecap="round"/><path d="M20 6.500v13" stroke="#fff" stroke-width="3.400" stroke-linecap="round"/></g></svg><div class="t" style="top:488.5px;font-size:15.5px;color:#1b3f7e;font-weight:bold;transform:scaleX(1.1876);transform-origin:0 0;left:14.1px;">Integration Time&nbsp; [ms]: <span style="color:#0000f0;text-decoration:underline">100,00</span></div><div class="t" style="top:512.5px;font-size:15.5px;color:#1b3f7e;font-weight:bold;transform:scaleX(1.1403);transform-origin:0 0;left:14.1px;">Averaging: <span style="color:#0000f0;text-decoration:underline">1</span></div><div class="t" style="top:558.5px;font-size:15.5px;color:#1b3f7e;font-weight:bold;transform:scaleX(1.1698);transform-origin:0 0;left:14.1px;">Measurements: 2836</div><div class="a" style="left:365px;top:186px;width:7px;height:832.700px;background:linear-gradient(90deg,#ececed 0,#f6f6f7 50%,#f2f2f3 56%,#b9b9ba 62%,#cfcfd0 100%)"></div><div class="a" style="left:372px;top:186px;width:4.500px;height:832.700px;background:linear-gradient(90deg,#d6dae0,#e2e5e9)"></div><div class="a" style="left:368px;top:577px;width:3px;height:51px;background:repeating-linear-gradient(#222 0 3px,transparent 3px 5.900px)"></div>
<div class="a" style="left:373px;top:186px;width:1547px;height:40px;background:linear-gradient(90deg,#e3e5e9,#d9dbdf 30%,#cfd0d3 55%,#c6c6c8 80%,#c3c3c4)"></div><div class="a" style="left:404px;top:192px;width:159.500px;height:34px;border-radius:5px 5px 0 0;background:#fff;border:1px solid #8e9196;border-top-width:1.500px;border-right-width:1.500px;border-bottom:none"></div><div class="t" style="top:202px;font-size:18px;color:#1a1a1a;letter-spacing:0.396px;left:413.3px;">Spectrum 1</div><div class="a" style="left:532px;top:197px;width:26px;height:26px;border-radius:4px;border:1px solid #cdd2db;background:linear-gradient(#eef0f5,#dfe3eb)"></div><svg class="a" style="left:535px;top:200px" width="20" height="20"><path d="M4.500 4.500l10 10M14.500 4.500l-10 10" stroke="#8b7d33" stroke-width="4.600" stroke-linecap="round"/><path d="M4.500 4.500l10 10M14.500 4.500l-10 10" stroke="#fff" stroke-width="2.400" stroke-linecap="round"/></svg><div class="a" style="left:374px;top:226px;width:1541px;height:162px;background:linear-gradient(90deg,#eef4fb,#f7fafd);border-left:1px solid #fff;border-top:1px solid #fdfaf2"></div><div class="a" style="left:374px;top:225px;width:31px;height:1px;background:#bfc3c9"></div><div class="a" style="left:564px;top:225px;width:1351px;height:1px;background:#bfc3c9"></div><div class="a" style="left:405px;top:225px;width:159px;height:2px;background:#fff"></div><div class="a" style="left:1915px;top:227px;width:5px;height:786px;background:linear-gradient(90deg,#b6bac0 0,#c4c8cc 40%,#d6d8dc 60%,#dcdee2)"></div><div class="a" style="left:1915px;top:226px;width:2.500px;height:41px;background:#f9fbfd;border-top:1px solid #fdfaf2"></div><div class="a" style="left:378px;top:267px;width:1537px;height:120px;background:linear-gradient(#ffffff 0%,#fdfdfe 40%,#eff1f4 80%,#eceef2);border:1px solid #b3c6e0;border-bottom:none;border-radius:3px"></div><div class="a" style="left:376px;top:386px;width:1539px;height:3px;background:linear-gradient(#8b8b8b,#b5b5b5)"></div><div class="a" style="left:383px;top:234px;width:75.500px;height:34px;border-radius:4px 5px 0 0;background:#fff;border:1px solid #a9b6c8;border-left-color:#c4d4ea;border-right:1.600px solid #8e9299;border-bottom:none"></div><div class="t" style="top:243px;font-size:19px;color:#555;letter-spacing:0.179px;left:392.6px;"><u style="text-underline-offset:3px;text-decoration-thickness:1.500px">H</u>ome</div><div class="t" style="top:243px;font-size:19px;color:#555;letter-spacing:-0.529px;left:473.0px;"><u style="text-underline-offset:3px;text-decoration-thickness:1.500px">F</u>ile</div><div class="t" style="top:243px;font-size:19px;color:#555;letter-spacing:0.529px;left:530.1px;"><u style="text-underline-offset:3px;text-decoration-thickness:1.500px">T</u>ools</div><svg class="a" style="left:1885px;top:237px" width="24" height="20"><path d="M12.200 6.200L19 13.700V15.500Q19 16.400 18 16.400H15.500L12.200 12.400L8.900 16.400H6.400Q5.400 16.400 5.400 15.500V13.700Z" fill="#fff" stroke="#565c66" stroke-width="1.700" stroke-linejoin="round"/></svg><svg class="a" style="left:406px;top:285px" width="36" height="36"><path d="M3.200 3.800q0-2 2-2h8.600q2 0 2 2v3.200h-12.600z" fill="#7d6008"/><path d="M3.200 6.900h27.400q1 0 1 1v26h-28.400z" fill="#86680a"/><path d="M7.600 14.900h26.200l-2.200 19h-27.700z" fill="#d3a704"/><path d="M7.600 14.900h26.200l-.2 1.600h-26.300z" fill="#e6c23a"/></svg><div class="t" style="top:328px;font-size:16px;color:#1a1a1a;letter-spacing:0.090px;left:404.6px;">Open</div><svg class="a" style="left:484px;top:285px" width="38" height="36"><defs><linearGradient id="flp" x1="0" y1="0" x2="1" y2="0"><stop offset="0" stop-color="#f2f2f2"/><stop offset=".6" stop-color="#c9c9c9"/><stop offset="1" stop-color="#e6e6e6"/></linearGradient></defs><rect x="3.200" y="2.500" width="31.300" height="32.100" rx="1.500" fill="#4a7ad8"/><rect x="5.400" y="3.200" width="24" height="8.800" fill="#2f5796"/><rect x="11.200" y="3.200" width="18.200" height="8.800" fill="url(#flp)"/><rect x="22.200" y="4" width="2.800" height="7" fill="#3a62a8"/><rect x="6.800" y="16" width="24.100" height="18.600" fill="#dcdcdc"/><rect x="6.800" y="16" width="24.100" height="1.500" fill="#f0f0f0"/></svg><div class="t" style="top:328px;font-size:16px;color:#1a1a1a;letter-spacing:-0.143px;left:483.8px;">Save</div><div class="t" style="top:364px;font-size:16px;color:#6a6f78;letter-spacing:0.289px;left:419.6px;">Spectral Data</div><div class="a" style="left:551px;top:280px;width:2px;height:96px;background:linear-gradient(90deg,#aebfdb 50%,#f6f8fb 50%)"></div><svg class="a" style="left:584px;top:286px" width="37" height="34"><rect x="1.400" y="1.700" width="33.500" height="31" fill="#f6f6f6" stroke="#e2e2e2"/><path d="M1.800 19C3 28 9 30 12 24S17 13 19.500 14 23 27 27.500 27 32 24 34.400 22" fill="none" stroke="#12c81e" stroke-width="2"/><path d="M1.800 8C10 10 14 28 20.600 28S28 14 34.400 13" fill="none" stroke="#1414c8" stroke-width="2"/><path d="M1.800 21.900L14.800 13.200Q24 5 27.900 3.200Q31.500 3 34.400 8.800" fill="none" stroke="#f01414" stroke-width="2"/></svg><div class="t" style="top:328px;font-size:16px;color:#1a1a1a;letter-spacing:0.401px;left:573.7px;">Legend</div><div class="a" style="left:657px;top:280px;width:2px;height:96px;background:linear-gradient(90deg,#aebfdb 50%,#f6f8fb 50%)"></div><div class="a" style="left:668px;top:276px;width:42px;height:42px;border-radius:4px;border:1px solid #c99a3a;background:linear-gradient(#fbd47a,#fad074 35%,#f7bd4e 75%,#f9c662)"></div><div class="t" style="top:277px;font-size:41px;color:#0b6ddb;font-weight:bold;font-style:italic;left:675.3px;-webkit-text-stroke:1.300px #0b6ddb;">S</div><div class="t" style="top:277px;font-size:30px;color:#0b6ddb;font-weight:bold;font-style:italic;left:726.5px;-webkit-text-stroke:.800px #0b6ddb;">S</div><div class="t" style="top:296px;font-size:20px;color:#0b6ddb;font-weight:bold;font-style:italic;left:741.5px;-webkit-text-stroke:.800px #0b6ddb;">d</div><div class="a" style="left:730px;top:306px;width:9px;height:2px;background:#0b6ddb"></div><div class="t" style="top:278px;font-size:41px;color:#0b6ddb;font-weight:bold;font-style:italic;left:776.7px;-webkit-text-stroke:1.300px #0b6ddb;">A</div><div class="t" style="top:278px;font-size:41px;color:#0b6ddb;font-weight:bold;font-style:italic;left:827.5px;-webkit-text-stroke:1.300px #0b6ddb;">T</div><div class="t" style="top:322px;font-size:41px;color:#0b6ddb;font-weight:bold;font-style:italic;left:674.2px;-webkit-text-stroke:1.300px #0b6ddb;">R</div><div class="t" style="top:323px;font-size:24px;color:#0b6ddb;font-weight:bold;font-style:italic;left:724.0px;-webkit-text-stroke:.800px #0b6ddb;">A</div><div class="t" style="top:322px;font-size:40px;color:#0b6ddb;font-weight:bold;font-style:italic;left:741.0px;-webkit-text-stroke:1.800px #0b6ddb;">I</div><div class="t" style="top:323px;font-size:24px;color:#0b6ddb;font-weight:bold;font-style:italic;left:775.5px;-webkit-text-stroke:.800px #0b6ddb;">R</div><div class="t" style="top:322px;font-size:40px;color:#0b6ddb;font-weight:bold;font-style:italic;left:792.5px;-webkit-text-stroke:1.800px #0b6ddb;">I</div><div class="t" style="top:364px;font-size:16px;color:#6a6f78;letter-spacing:0.656px;left:715.0px;">Measure Mode</div><div class="a" style="left:874px;top:280px;width:2px;height:96px;background:linear-gradient(90deg,#aebfdb 50%,#f6f8fb 50%)"></div><svg class="a" style="left:892px;top:299px" width="36" height="36"><circle cx="16" cy="16.500" r="13.600" fill="#fff" stroke="#222" stroke-width="1.800"/><path d="M26.800 27.300l3.200 3.200" stroke="#111" stroke-width="5" stroke-linecap="round"/><path d="M16 9v15" stroke="#777" stroke-width="3"/><path d="M16 5l-5 6.500h10zM16 28l-5-6.500h10z" fill="#777"/></svg><svg class="a" style="left:949px;top:299px" width="36" height="36"><circle cx="16" cy="16.500" r="13.600" fill="#fff" stroke="#222" stroke-width="1.800"/><path d="M26.800 27.300l3.200 3.200" stroke="#111" stroke-width="5" stroke-linecap="round"/><path d="M16 8v17M7.500 16.500h17" stroke="#777" stroke-width="2.200"/><path d="M16 4.500l-3.800 5h7.600zM16 28.500l-3.800-5h7.600zM4 16.500l5-3.800v7.600zM28 16.500l-5-3.800v7.600z" fill="#777"/></svg><svg class="a" style="left:1013px;top:299px" width="36" height="36"><circle cx="16" cy="16.500" r="13.600" fill="#fff" stroke="#222" stroke-width="1.800"/><path d="M26.800 27.300l3.200 3.200" stroke="#111" stroke-width="5" stroke-linecap="round"/><rect x="8" y="8.500" width="16" height="16" fill="none" stroke="#555" stroke-width="1.300" stroke-dasharray="2 1.500"/></svg><svg class="a" style="left:1058px;top:314px" width="10" height="6"><path d="M.5 .500h8l-4 4.500z" fill="#222"/></svg><div class="t" style="top:364px;font-size:16px;color:#6a6f78;letter-spacing:0.430px;left:937.2px;">Scale Options</div><div class="a" style="left:1091px;top:280px;width:2px;height:96px;background:linear-gradient(90deg,#aebfdb 50%,#f6f8fb 50%)"></div><div class="a" style="left:1106px;top:284px;width:13px;height:13px;border:1px solid #b4b8c0;background:linear-gradient(135deg,#e4e6ea,#fafafa)"></div><svg class="a" style="left:1106px;top:283px" width="14" height="14"><path d="M3 6.500l3 4.500 5-8.500" fill="none" stroke="#3a4a9c" stroke-width="2"/></svg><div class="t" style="top:284px;font-size:16px;color:#1a1a1a;letter-spacing:-0.657px;left:1126.3px;">Grid</div><div class="a" style="left:1106px;top:314px;width:13px;height:13px;border:1px solid #b4b8c0;background:linear-gradient(135deg,#e4e6ea,#fafafa)"></div><div class="t" style="top:314px;font-size:16px;color:#1a1a1a;letter-spacing:-0.298px;left:1126.3px;">Visible Spectrum</div><div class="a" style="left:1106px;top:344px;width:13px;height:13px;border:1px solid #b4b8c0;background:linear-gradient(135deg,#e4e6ea,#fafafa)"></div><div class="t" style="top:344px;font-size:16px;color:#1a1a1a;letter-spacing:-0.119px;left:1126.3px;">Logarithmic</div><div class="a" style="left:1257.5px;top:284px;width:13px;height:13px;border:1px solid #b4b8c0;background:linear-gradient(135deg,#e4e6ea,#fafafa)"></div><div class="t" style="top:284px;font-size:16px;color:#1a1a1a;letter-spacing:0.014px;left:1277.8px;">Photon Density</div><div class="a" style="left:1257.5px;top:314px;width:13px;height:13px;border:1px solid #b4b8c0;background:linear-gradient(135deg,#e4e6ea,#fafafa)"></div><div class="t" style="top:314px;font-size:16px;color:#1a1a1a;letter-spacing:-0.028px;left:1277.8px;">Hide Chart</div><div class="t" style="top:364px;font-size:16px;color:#6a6f78;letter-spacing:0.334px;left:1235.4px;">Display</div><div class="a" style="left:1421px;top:280px;width:2px;height:96px;background:linear-gradient(90deg,#aebfdb 50%,#f6f8fb 50%)"></div><div class="a" style="left:1433px;top:278px;width:75px;height:36px;border-radius:4px;border:1px solid #c9ccd4;background:linear-gradient(#f6f7fa,#e4e7ee 55%,#dfe3eb)"></div><div class="t" style="top:289px;font-size:16px;color:#1a1a1a;letter-spacing:-0.922px;left:1460.8px;">On</div><div class="a" style="left:1433px;top:315px;width:75px;height:36px;border-radius:4px;border:1px solid #c99a3a;background:linear-gradient(#fbd27a,#f9c45c 45%,#f6b846 50%,#f9c860)"></div><div class="t" style="top:324.5px;font-size:16px;color:#1a1a1a;letter-spacing:0.418px;left:1460.8px;">Off</div><div class="t" style="top:364px;font-size:16px;color:#6a6f78;letter-spacing:0.758px;left:1444.3px;">Splining</div><div class="a" style="left:1517px;top:280px;width:2px;height:96px;background:linear-gradient(90deg,#aebfdb 50%,#f6f8fb 50%)"></div><div class="a" style="left:376px;top:389px;width:1539px;height:623.500px;background:#fff"></div><div class="a" style="left:378.700px;top:983px;width:1537px;height:29.800px;border:1.300px solid #9aa0aa;border-bottom:2.700px solid #9a9ea4;border-right:2.500px solid #9aa0aa;background:linear-gradient(#fdfdfe,#f1f3f7 45%,#dfe3ec)"></div><div class="a" style="left:604px;top:985px;width:1px;height:24px;background:#d5d9e0"></div><div class="a" style="left:1355px;top:985px;width:1px;height:24px;background:#d5d9e0"></div>
<svg class="a" style="left:376px;top:389px;font-family:'Liberation Sans',sans-serif" width="1539" height="594" viewBox="376 389 1539 594"><path d="M545.5 398V933.5" stroke="#b0b0b0" stroke-width="1.400" stroke-dasharray="5 4"/><path d="M624.5 398V933.5" stroke="#b0b0b0" stroke-width="1.400" stroke-dasharray="5 4"/><path d="M702.5 398V933.5" stroke="#b0b0b0" stroke-width="1.400" stroke-dasharray="5 4"/><path d="M781.5 398V933.5" stroke="#b0b0b0" stroke-width="1.400" stroke-dasharray="5 4"/><path d="M860.5 398V933.5" stroke="#b0b0b0" stroke-width="1.400" stroke-dasharray="5 4"/><path d="M939.5 398V933.5" stroke="#b0b0b0" stroke-width="1.400" stroke-dasharray="5 4"/><path d="M1018.5 398V933.5" stroke="#b0b0b0" stroke-width="1.400" stroke-dasharray="5 4"/><path d="M1096.5 398V933.5" stroke="#b0b0b0" stroke-width="1.400" stroke-dasharray="5 4"/><path d="M1175.5 398V933.5" stroke="#b0b0b0" stroke-width="1.400" stroke-dasharray="5 4"/><path d="M1254.5 398V933.5" stroke="#b0b0b0" stroke-width="1.400" stroke-dasharray="5 4"/><path d="M1333.5 398V933.5" stroke="#b0b0b0" stroke-width="1.400" stroke-dasharray="5 4"/><path d="M1412.5 398V933.5" stroke="#b0b0b0" stroke-width="1.400" stroke-dasharray="5 4"/><path d="M1490.5 398V933.5" stroke="#b0b0b0" stroke-width="1.400" stroke-dasharray="5 4"/><path d="M1569.5 398V933.5" stroke="#b0b0b0" stroke-width="1.400" stroke-dasharray="5 4"/><path d="M1648.5 398V933.5" stroke="#b0b0b0" stroke-width="1.400" stroke-dasharray="5 4"/><path d="M1727.5 398V933.5" stroke="#b0b0b0" stroke-width="1.400" stroke-dasharray="5 4"/><path d="M1806.5 398V933.5" stroke="#b0b0b0" stroke-width="1.400" stroke-dasharray="5 4"/><path d="M467.5 910.5H1884.5" stroke="#b0b0b0" stroke-width="1.400" stroke-dasharray="5 4"/><path d="M467.5 864.5H1884.5" stroke="#b0b0b0" stroke-width="1.400" stroke-dasharray="5 4"/><path d="M467.5 819.5H1884.5" stroke="#b0b0b0" stroke-width="1.400" stroke-dasharray="5 4"/><path d="M467.5 773.5H1884.5" stroke="#b0b0b0" stroke-width="1.400" stroke-dasharray="5 4"/><path d="M467.5 728.5H1884.5" stroke="#b0b0b0" stroke-width="1.400" stroke-dasharray="5 4"/><path d="M467.5 683.5H1884.5" stroke="#b0b0b0" stroke-width="1.400" stroke-dasharray="5 4"/><path d="M467.5 637.5H1884.5" stroke="#b0b0b0" stroke-width="1.400" stroke-dasharray="5 4"/><path d="M467.5 592.5H1884.5" stroke="#b0b0b0" stroke-width="1.400" stroke-dasharray="5 4"/><path d="M467.5 546.5H1884.5" stroke="#b0b0b0" stroke-width="1.400" stroke-dasharray="5 4"/><path d="M467.5 501.5H1884.5" stroke="#b0b0b0" stroke-width="1.400" stroke-dasharray="5 4"/><path d="M467.5 455.5H1884.5" stroke="#b0b0b0" stroke-width="1.400" stroke-dasharray="5 4"/><path d="M467.5 410.5H1884.5" stroke="#b0b0b0" stroke-width="1.400" stroke-dasharray="5 4"/><path d="M466.0 883.0 L467.0 882.0 L482.4 857.6 L489.4 869.4 L495.3 877.6 L503.5 876.0 L509.4 860.0 L515.3 861.2 L523.5 860.0 L529.4 868.2 L534.8 871.8 L548.2 848.2 L555.3 869.4 L561.2 873.6 L569.4 873.6 L575.3 861.2 L581.2 895.8 L587.1 848.9 L600.0 848.9 L607.1 852.9 L614.1 864.0 L620.7 842.8 L627.1 847.5 L634.1 856.5 L640.0 858.8 L647.5 832.9 L653.4 864.7 L664.7 851.8 L673.6 844.0 L678.8 854.1 L686.6 841.2 L698.8 858.8 L704.7 847.1 L712.9 838.8 L718.1 820.5 L725.4 848.2 L731.3 811.3 L737.6 842.4 L744.7 860.0 L751.1 803.5 L757.6 821.9 L764.7 824.0 L771.8 816.0 L777.6 816.0 L784.0 827.0 L790.6 815.3 L803.5 814.8 L809.4 791.8 L816.4 813.5 L822.7 778.6 L829.1 805.9 L835.5 786.2 L841.8 771.0 L848.2 747.3 L854.6 771.0 L861.7 774.5 L868.1 745.5 L874.2 775.3 L881.3 784.7 L887.2 744.0 L893.6 732.0 L900.4 735.3 L906.8 728.2 L912.7 711.1 L920.1 729.4 L925.9 715.4 L933.6 714.6 L939.9 689.9 L945.8 717.5 L953.2 704.0 L959.6 677.7 L965.9 693.2 L972.3 686.6 L977.6 660.6 L984.5 660.1 L997.3 647.4 L1004.9 642.3 L1010.0 610.4 L1024.0 619.9 L1029.1 610.4 L1034.2 603.8 L1044.5 594.1 L1050.2 594.0 L1055.3 567.0 L1061.4 585.6 L1067.9 560.4 L1074.8 552.0 L1081.0 584.3 L1087.5 528.8 L1094.4 510.1 L1100.6 523.2 L1106.5 549.2 L1114.5 526.9 L1120.1 488.7 L1133.2 523.7 L1139.7 523.7 L1145.6 481.2 L1151.2 487.8 L1158.3 484.4 L1164.8 496.7 L1171.0 472.5 L1178.3 491.1 L1184.4 457.6 L1190.6 477.5 L1198.0 474.2 L1204.3 474.2 L1209.6 500.4 L1215.7 467.8 L1223.5 492.8 L1229.1 458.9 L1235.3 484.0 L1241.2 444.9 L1248.7 471.9 L1256.1 464.5 L1261.2 463.5 L1266.4 484.6 L1274.8 484.7 L1280.2 516.6 L1285.8 489.3 L1294.1 489.3 L1300.0 454.1 L1306.1 481.9 L1319.2 481.9 L1325.3 494.3 L1331.4 513.5 L1337.7 460.0 L1344.4 511.9 L1350.5 505.6 L1356.8 515.0 L1362.9 501.1 L1370.4 520.9 L1376.7 510.1 L1382.3 552.5 L1388.4 530.4 L1395.9 526.5 L1408.0 572.1 L1414.4 557.5 L1422.3 549.6 L1427.9 537.2 L1433.5 596.3 L1439.2 560.8 L1447.1 586.8 L1453.2 566.0 L1459.5 590.2 L1465.8 576.6 L1478.7 620.2 L1484.7 582.3 L1491.2 633.0 L1497.7 633.0 L1504.0 605.7 L1510.3 627.5 L1516.8 624.1 L1521.8 623.8 L1529.5 613.9 L1535.4 672.5 L1541.7 653.9 L1548.1 673.5 L1555.0 673.5 L1560.8 691.6 L1572.8 673.8 L1579.9 688.3 L1586.8 685.2 L1591.9 730.3 L1598.3 738.5 L1604.6 713.2 L1612.3 726.5 L1618.2 718.3 L1624.5 731.6 L1629.6 736.2 L1636.5 736.2 L1643.6 741.3 L1650.0 757.6 L1656.1 748.2 L1661.5 774.4 L1669.1 745.1 L1675.5 754.5 L1681.1 798.6 L1686.7 777.5 L1693.1 769.3 L1700.1 783.0 L1706.6 794.7 L1712.3 821.0 L1718.8 804.3 L1725.0 800.4 L1732.2 787.8 L1737.6 807.5 L1743.9 821.3 L1749.4 809.8 L1756.5 803.5 L1762.7 812.2 L1769.3 822.4 L1775.3 807.5 L1781.3 846.7 L1787.5 820.8 L1794.6 834.9 L1800.9 829.7 L1807.1 832.5 L1813.3 814.5 L1819.7 823.1 L1826.3 827.1 L1832.2 817.6 L1838.0 830.2 L1844.6 828.6 L1850.6 856.9 L1857.6 809.8 L1863.5 842.7 L1869.4 846.7 L1876.0 846.7 L1884.8 834.9" fill="none" stroke="#0000ff" stroke-width="3" stroke-linejoin="round"/><path d="M465.5 397H1885.5V934.5" fill="none" stroke="#1a1a1a" stroke-width="1.500"/><path d="M465.5 396.5V936.0" stroke="#000" stroke-width="3"/><path d="M463.5 934.5H1886.2" stroke="#000" stroke-width="3"/><path d="M463.3 399V934.5" stroke="#444" stroke-width="1.200" stroke-dasharray="1 1.270"/><path d="M459.500 932.5H464" stroke="#777" stroke-width="1"/><text x="455" y="938.4" text-anchor="end" font-size="16" fill="#111">-200</text><path d="M459.500 910.5H464" stroke="#777" stroke-width="1"/><text x="455" y="915.7" text-anchor="end" font-size="16" fill="#111">-100</text><path d="M459.500 887.5H464" stroke="#777" stroke-width="1"/><text x="455" y="893.0" text-anchor="end" font-size="16" fill="#111">0</text><path d="M459.500 864.5H464" stroke="#777" stroke-width="1"/><text x="455" y="870.3" text-anchor="end" font-size="16" fill="#111">100</text><path d="M459.500 842.5H464" stroke="#777" stroke-width="1"/><text x="455" y="847.5" text-anchor="end" font-size="16" fill="#111">200</text><path d="M459.500 819.5H464" stroke="#777" stroke-width="1"/><text x="455" y="824.8" text-anchor="end" font-size="16" fill="#111">300</text><path d="M459.500 796.5H464" stroke="#777" stroke-width="1"/><text x="455" y="802.1" text-anchor="end" font-size="16" fill="#111">400</text><path d="M459.500 773.5H464" stroke="#777" stroke-width="1"/><text x="455" y="779.4" text-anchor="end" font-size="16" fill="#111">500</text><path d="M459.500 751.5H464" stroke="#777" stroke-width="1"/><text x="455" y="756.7" text-anchor="end" font-size="16" fill="#111">600</text><path d="M459.500 728.5H464" stroke="#777" stroke-width="1"/><text x="455" y="734.0" text-anchor="end" font-size="16" fill="#111">700</text><path d="M459.500 705.5H464" stroke="#777" stroke-width="1"/><text x="455" y="711.2" text-anchor="end" font-size="16" fill="#111">800</text><path d="M459.500 683.5H464" stroke="#777" stroke-width="1"/><text x="455" y="688.5" text-anchor="end" font-size="16" fill="#111">900</text><path d="M459.500 660.5H464" stroke="#777" stroke-width="1"/><text x="455" y="665.8" text-anchor="end" font-size="16" fill="#111">1000</text><path d="M459.500 637.5H464" stroke="#777" stroke-width="1"/><text x="455" y="643.1" text-anchor="end" font-size="16" fill="#111">1100</text><path d="M459.500 614.5H464" stroke="#777" stroke-width="1"/><text x="455" y="620.4" text-anchor="end" font-size="16" fill="#111">1200</text><path d="M459.500 592.5H464" stroke="#777" stroke-width="1"/><text x="455" y="597.6" text-anchor="end" font-size="16" fill="#111">1300</text><path d="M459.500 569.5H464" stroke="#777" stroke-width="1"/><text x="455" y="574.9" text-anchor="end" font-size="16" fill="#111">1400</text><path d="M459.500 546.5H464" stroke="#777" stroke-width="1"/><text x="455" y="552.2" text-anchor="end" font-size="16" fill="#111">1500</text><path d="M459.500 523.5H464" stroke="#777" stroke-width="1"/><text x="455" y="529.5" text-anchor="end" font-size="16" fill="#111">1600</text><path d="M459.500 501.5H464" stroke="#777" stroke-width="1"/><text x="455" y="506.8" text-anchor="end" font-size="16" fill="#111">1700</text><path d="M459.500 478.5H464" stroke="#777" stroke-width="1"/><text x="455" y="484.1" text-anchor="end" font-size="16" fill="#111">1800</text><path d="M459.500 455.5H464" stroke="#777" stroke-width="1"/><text x="455" y="461.3" text-anchor="end" font-size="16" fill="#111">1900</text><path d="M459.500 433.5H464" stroke="#777" stroke-width="1"/><text x="455" y="438.6" text-anchor="end" font-size="16" fill="#111">2000</text><path d="M459.500 410.5H464" stroke="#777" stroke-width="1"/><text x="455" y="415.9" text-anchor="end" font-size="16" fill="#111">2100</text><path d="M466.5 935.5V942.500" stroke="#666" stroke-width="1.200"/><path d="M479.5 935.5V939" stroke="#888" stroke-width="1"/><path d="M492.5 935.5V939" stroke="#888" stroke-width="1"/><path d="M505.5 935.5V939" stroke="#888" stroke-width="1"/><path d="M519.5 935.5V939" stroke="#888" stroke-width="1"/><path d="M532.5 935.5V939" stroke="#888" stroke-width="1"/><text x="466.0" y="962.000" text-anchor="middle" font-size="16" fill="#111">1 025</text><path d="M545.5 935.5V942.500" stroke="#666" stroke-width="1.200"/><path d="M558.5 935.5V939" stroke="#888" stroke-width="1"/><path d="M571.5 935.5V939" stroke="#888" stroke-width="1"/><path d="M584.5 935.5V939" stroke="#888" stroke-width="1"/><path d="M597.5 935.5V939" stroke="#888" stroke-width="1"/><path d="M610.5 935.5V939" stroke="#888" stroke-width="1"/><text x="544.8" y="962.000" text-anchor="middle" font-size="16" fill="#111">1 025,5</text><path d="M624.5 935.5V942.500" stroke="#666" stroke-width="1.200"/><path d="M637.5 935.5V939" stroke="#888" stroke-width="1"/><path d="M650.5 935.5V939" stroke="#888" stroke-width="1"/><path d="M663.5 935.5V939" stroke="#888" stroke-width="1"/><path d="M676.5 935.5V939" stroke="#888" stroke-width="1"/><path d="M689.5 935.5V939" stroke="#888" stroke-width="1"/><text x="623.6" y="962.000" text-anchor="middle" font-size="16" fill="#111">1 026</text><path d="M702.5 935.5V942.500" stroke="#666" stroke-width="1.200"/><path d="M716.5 935.5V939" stroke="#888" stroke-width="1"/><path d="M729.5 935.5V939" stroke="#888" stroke-width="1"/><path d="M742.5 935.5V939" stroke="#888" stroke-width="1"/><path d="M755.5 935.5V939" stroke="#888" stroke-width="1"/><path d="M768.5 935.5V939" stroke="#888" stroke-width="1"/><text x="702.4" y="962.000" text-anchor="middle" font-size="16" fill="#111">1 026,5</text><path d="M781.5 935.5V942.500" stroke="#666" stroke-width="1.200"/><path d="M794.5 935.5V939" stroke="#888" stroke-width="1"/><path d="M807.5 935.5V939" stroke="#888" stroke-width="1"/><path d="M821.5 935.5V939" stroke="#888" stroke-width="1"/><path d="M834.5 935.5V939" stroke="#888" stroke-width="1"/><path d="M847.5 935.5V939" stroke="#888" stroke-width="1"/><text x="781.2" y="962.000" text-anchor="middle" font-size="16" fill="#111">1 027</text><path d="M860.5 935.5V942.500" stroke="#666" stroke-width="1.200"/><path d="M873.5 935.5V939" stroke="#888" stroke-width="1"/><path d="M886.5 935.5V939" stroke="#888" stroke-width="1"/><path d="M899.5 935.5V939" stroke="#888" stroke-width="1"/><path d="M913.5 935.5V939" stroke="#888" stroke-width="1"/><path d="M926.5 935.5V939" stroke="#888" stroke-width="1"/><text x="860.0" y="962.000" text-anchor="middle" font-size="16" fill="#111">1 027,5</text><path d="M939.5 935.5V942.500" stroke="#666" stroke-width="1.200"/><path d="M952.5 935.5V939" stroke="#888" stroke-width="1"/><path d="M965.5 935.5V939" stroke="#888" stroke-width="1"/><path d="M978.5 935.5V939" stroke="#888" stroke-width="1"/><path d="M991.5 935.5V939" stroke="#888" stroke-width="1"/><path d="M1005.5 935.5V939" stroke="#888" stroke-width="1"/><text x="938.8" y="962.000" text-anchor="middle" font-size="16" fill="#111">1 028</text><path d="M1018.5 935.5V942.500" stroke="#666" stroke-width="1.200"/><path d="M1031.5 935.5V939" stroke="#888" stroke-width="1"/><path d="M1044.5 935.5V939" stroke="#888" stroke-width="1"/><path d="M1057.5 935.5V939" stroke="#888" stroke-width="1"/><path d="M1070.5 935.5V939" stroke="#888" stroke-width="1"/><path d="M1083.5 935.5V939" stroke="#888" stroke-width="1"/><text x="1017.6" y="962.000" text-anchor="middle" font-size="16" fill="#111">1 028,5</text><path d="M1096.5 935.5V942.500" stroke="#666" stroke-width="1.200"/><path d="M1110.5 935.5V939" stroke="#888" stroke-width="1"/><path d="M1123.5 935.5V939" stroke="#888" stroke-width="1"/><path d="M1136.5 935.5V939" stroke="#888" stroke-width="1"/><path d="M1149.5 935.5V939" stroke="#888" stroke-width="1"/><path d="M1162.5 935.5V939" stroke="#888" stroke-width="1"/><text x="1096.4" y="962.000" text-anchor="middle" font-size="16" fill="#111">1 029</text><path d="M1175.5 935.5V942.500" stroke="#666" stroke-width="1.200"/><path d="M1188.5 935.5V939" stroke="#888" stroke-width="1"/><path d="M1202.5 935.5V939" stroke="#888" stroke-width="1"/><path d="M1215.5 935.5V939" stroke="#888" stroke-width="1"/><path d="M1228.5 935.5V939" stroke="#888" stroke-width="1"/><path d="M1241.5 935.5V939" stroke="#888" stroke-width="1"/><text x="1175.2" y="962.000" text-anchor="middle" font-size="16" fill="#111">1 029,5</text><path d="M1254.5 935.5V942.500" stroke="#666" stroke-width="1.200"/><path d="M1267.5 935.5V939" stroke="#888" stroke-width="1"/><path d="M1280.5 935.5V939" stroke="#888" stroke-width="1"/><path d="M1293.5 935.5V939" stroke="#888" stroke-width="1"/><path d="M1307.5 935.5V939" stroke="#888" stroke-width="1"/><path d="M1320.5 935.5V939" stroke="#888" stroke-width="1"/><text x="1254.1" y="962.000" text-anchor="middle" font-size="16" fill="#111">1 030</text><path d="M1333.5 935.5V942.500" stroke="#666" stroke-width="1.200"/><path d="M1346.5 935.5V939" stroke="#888" stroke-width="1"/><path d="M1359.5 935.5V939" stroke="#888" stroke-width="1"/><path d="M1372.5 935.5V939" stroke="#888" stroke-width="1"/><path d="M1385.5 935.5V939" stroke="#888" stroke-width="1"/><path d="M1399.5 935.5V939" stroke="#888" stroke-width="1"/><text x="1332.9" y="962.000" text-anchor="middle" font-size="16" fill="#111">1 030,5</text><path d="M1412.5 935.5V942.500" stroke="#666" stroke-width="1.200"/><path d="M1425.5 935.5V939" stroke="#888" stroke-width="1"/><path d="M1438.5 935.5V939" stroke="#888" stroke-width="1"/><path d="M1451.5 935.5V939" stroke="#888" stroke-width="1"/><path d="M1464.5 935.5V939" stroke="#888" stroke-width="1"/><path d="M1477.5 935.5V939" stroke="#888" stroke-width="1"/><text x="1411.7" y="962.000" text-anchor="middle" font-size="16" fill="#111">1 031</text><path d="M1490.5 935.5V942.500" stroke="#666" stroke-width="1.200"/><path d="M1504.5 935.5V939" stroke="#888" stroke-width="1"/><path d="M1517.5 935.5V939" stroke="#888" stroke-width="1"/><path d="M1530.5 935.5V939" stroke="#888" stroke-width="1"/><path d="M1543.5 935.5V939" stroke="#888" stroke-width="1"/><path d="M1556.5 935.5V939" stroke="#888" stroke-width="1"/><text x="1490.5" y="962.000" text-anchor="middle" font-size="16" fill="#111">1 031,5</text><path d="M1569.5 935.5V942.500" stroke="#666" stroke-width="1.200"/><path d="M1582.5 935.5V939" stroke="#888" stroke-width="1"/><path d="M1596.5 935.5V939" stroke="#888" stroke-width="1"/><path d="M1609.5 935.5V939" stroke="#888" stroke-width="1"/><path d="M1622.5 935.5V939" stroke="#888" stroke-width="1"/><path d="M1635.5 935.5V939" stroke="#888" stroke-width="1"/><text x="1569.3" y="962.000" text-anchor="middle" font-size="16" fill="#111">1 032</text><path d="M1648.5 935.5V942.500" stroke="#666" stroke-width="1.200"/><path d="M1661.5 935.5V939" stroke="#888" stroke-width="1"/><path d="M1674.5 935.5V939" stroke="#888" stroke-width="1"/><path d="M1687.5 935.5V939" stroke="#888" stroke-width="1"/><path d="M1701.5 935.5V939" stroke="#888" stroke-width="1"/><path d="M1714.5 935.5V939" stroke="#888" stroke-width="1"/><text x="1648.1" y="962.000" text-anchor="middle" font-size="16" fill="#111">1 032,5</text><path d="M1727.5 935.5V942.500" stroke="#666" stroke-width="1.200"/><path d="M1740.5 935.5V939" stroke="#888" stroke-width="1"/><path d="M1753.5 935.5V939" stroke="#888" stroke-width="1"/><path d="M1766.5 935.5V939" stroke="#888" stroke-width="1"/><path d="M1779.5 935.5V939" stroke="#888" stroke-width="1"/><path d="M1793.5 935.5V939" stroke="#888" stroke-width="1"/><text x="1726.9" y="962.000" text-anchor="middle" font-size="16" fill="#111">1 033</text><path d="M1806.5 935.5V942.500" stroke="#666" stroke-width="1.200"/><path d="M1819.5 935.5V939" stroke="#888" stroke-width="1"/><path d="M1832.5 935.5V939" stroke="#888" stroke-width="1"/><path d="M1845.5 935.5V939" stroke="#888" stroke-width="1"/><path d="M1858.5 935.5V939" stroke="#888" stroke-width="1"/><path d="M1871.5 935.5V939" stroke="#888" stroke-width="1"/><text x="1805.7" y="962.000" text-anchor="middle" font-size="16" fill="#111">1 033,5</text><path d="M1884.5 935.5V942.500" stroke="#666" stroke-width="1.200"/><text x="1884.5" y="962.000" text-anchor="middle" font-size="16" fill="#111">1 034</text><text transform="translate(409.500 665.500) rotate(-90)" text-anchor="middle" font-size="16.500" fill="#111">Scope [ADC Counts]</text><text x="1175" y="982.500" text-anchor="middle" font-size="16" fill="#111">Wavelength [nm]</text></svg>
<div class="a" style="left:0;top:1015.600px;width:369px;height:4.400px;background:#fff"></div>
<div class="a" style="left:372px;top:1012.500px;width:1548px;height:7.500px;background:linear-gradient(90deg,#dfe2e6,#d6d8dc 40%,#cbcdd0 75%,#c9cbce)"></div>
<div class="a" style="left:0;top:1018.800px;width:1920px;height:1.200px;background:#2b93e6"></div>
</body></html>
